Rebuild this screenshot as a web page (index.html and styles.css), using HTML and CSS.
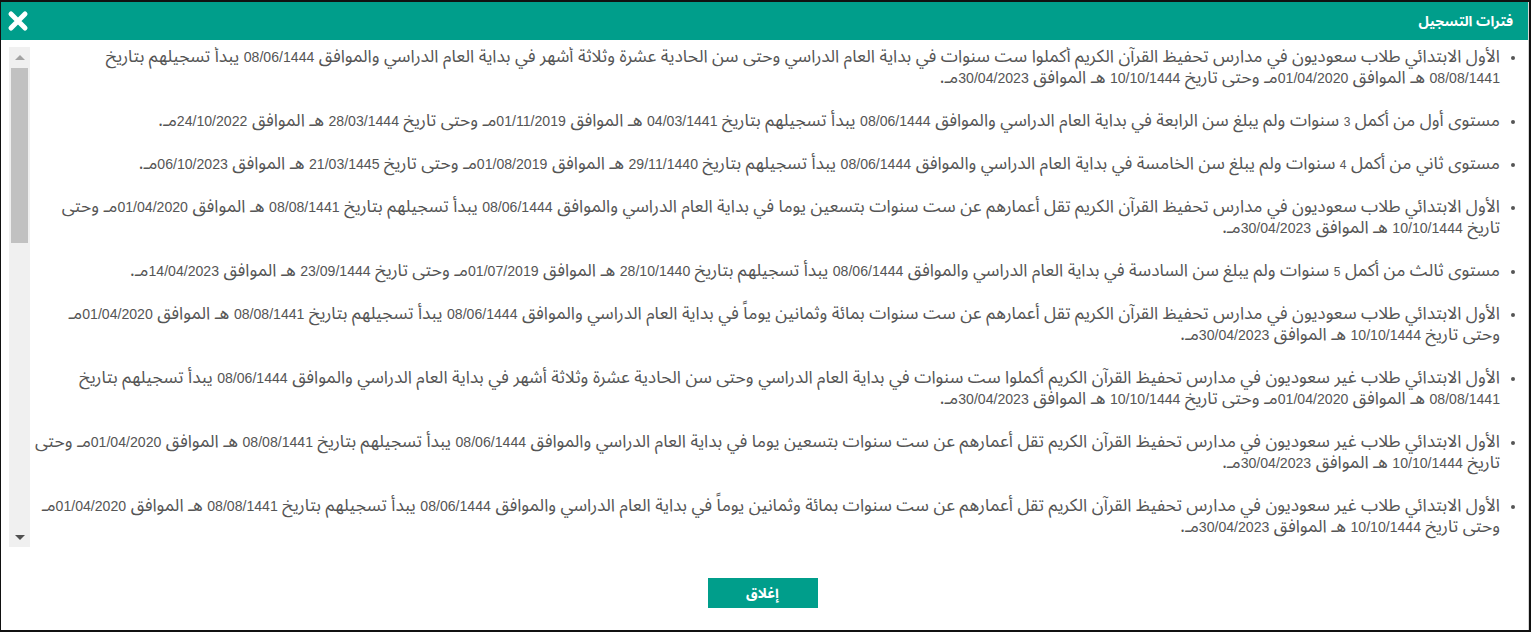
FILE: index.html
```html
<!DOCTYPE html>
<html lang="ar" dir="rtl">
<head>
<meta charset="utf-8">
<title>فترات التسجيل</title>
<link rel="stylesheet" href="styles.css">
</head>
<body>
<div class="dialog">
  <div class="dialog-header">
    <h1 class="dialog-title">فترات التسجيل</h1>
    <button class="close-x" type="button" aria-label="إغلاق">
      <svg width="22" height="22" viewBox="0 0 22 22"><path d="M4 4 L18 18 M18 4 L4 18" stroke="#fff" stroke-width="5" stroke-linecap="round" fill="none"/></svg>
    </button>
  </div>
  <div class="dialog-body">
    <div class="scroll-frame">
      <div class="scroll-content">
        <ul class="periods">
          <li>الأول الابتدائي طلاب سعوديون في مدارس تحفيظ القرآن الكريم أكملوا ست سنوات في بداية العام الدراسي وحتى سن الحادية عشرة وثلاثة أشهر في بداية العام الدراسي والموافق <time>08/06/1444</time> يبدأ تسجيلهم بتاريخ <time>08/08/1441</time> هـ الموافق <time>01/04/2020</time>مـ وحتى تاريخ <time>10/10/1444</time> هـ الموافق <time>30/04/2023</time>مـ.</li>
          <li>مستوى أول من أكمل <span class="num">3</span> سنوات ولم يبلغ سن الرابعة في بداية العام الدراسي والموافق <time>08/06/1444</time> يبدأ تسجيلهم بتاريخ <time>04/03/1441</time> هـ الموافق <time>01/11/2019</time>مـ وحتى تاريخ <time>28/03/1444</time> هـ الموافق <time>24/10/2022</time>مـ.</li>
          <li>مستوى ثاني من أكمل <span class="num">4</span> سنوات ولم يبلغ سن الخامسة في بداية العام الدراسي والموافق <time>08/06/1444</time> يبدأ تسجيلهم بتاريخ <time>29/11/1440</time> هـ الموافق <time>01/08/2019</time>مـ وحتى تاريخ <time>21/03/1445</time> هـ الموافق <time>06/10/2023</time>مـ.</li>
          <li>الأول الابتدائي طلاب سعوديون في مدارس تحفيظ القرآن الكريم تقل أعمارهم عن ست سنوات بتسعين يوما في بداية العام الدراسي والموافق <time>08/06/1444</time> يبدأ تسجيلهم بتاريخ <time>08/08/1441</time> هـ الموافق <time>01/04/2020</time>مـ وحتى تاريخ <time>10/10/1444</time> هـ الموافق <time>30/04/2023</time>مـ.</li>
          <li>مستوى ثالث من أكمل <span class="num">5</span> سنوات ولم يبلغ سن السادسة في بداية العام الدراسي والموافق <time>08/06/1444</time> يبدأ تسجيلهم بتاريخ <time>28/10/1440</time> هـ الموافق <time>01/07/2019</time>مـ وحتى تاريخ <time>23/09/1444</time> هـ الموافق <time>14/04/2023</time>مـ.</li>
          <li>الأول الابتدائي طلاب سعوديون في مدارس تحفيظ القرآن الكريم تقل أعمارهم عن ست سنوات بمائة وثمانين يوماً في بداية العام الدراسي والموافق <time>08/06/1444</time> يبدأ تسجيلهم بتاريخ <time>08/08/1441</time> هـ الموافق <time>01/04/2020</time>مـ وحتى تاريخ <time>10/10/1444</time> هـ الموافق <time>30/04/2023</time>مـ.</li>
          <li>الأول الابتدائي طلاب غير سعوديون في مدارس تحفيظ القرآن الكريم أكملوا ست سنوات في بداية العام الدراسي وحتى سن الحادية عشرة وثلاثة أشهر في بداية العام الدراسي والموافق <time>08/06/1444</time> يبدأ تسجيلهم بتاريخ <time>08/08/1441</time> هـ الموافق <time>01/04/2020</time>مـ وحتى تاريخ <time>10/10/1444</time> هـ الموافق <time>30/04/2023</time>مـ.</li>
          <li>الأول الابتدائي طلاب غير سعوديون في مدارس تحفيظ القرآن الكريم تقل أعمارهم عن ست سنوات بتسعين يوما في بداية العام الدراسي والموافق <time>08/06/1444</time> يبدأ تسجيلهم بتاريخ <time>08/08/1441</time> هـ الموافق <time>01/04/2020</time>مـ وحتى تاريخ <time>10/10/1444</time> هـ الموافق <time>30/04/2023</time>مـ.</li>
          <li>الأول الابتدائي طلاب غير سعوديون في مدارس تحفيظ القرآن الكريم تقل أعمارهم عن ست سنوات بمائة وثمانين يوماً في بداية العام الدراسي والموافق <time>08/06/1444</time> يبدأ تسجيلهم بتاريخ <time>08/08/1441</time> هـ الموافق <time>01/04/2020</time>مـ وحتى تاريخ <time>10/10/1444</time> هـ الموافق <time>30/04/2023</time>مـ.</li>
          <li>مستوى أول طلاب غير سعوديين من أكمل <span class="num">3</span> سنوات ولم يبلغ سن الرابعة في بداية العام الدراسي والموافق <time>08/06/1444</time> يبدأ تسجيلهم بتاريخ <time>04/03/1441</time> هـ الموافق <time>01/11/2019</time>مـ وحتى تاريخ <time>28/03/1444</time> هـ الموافق <time>24/10/2022</time>مـ.</li>
        </ul>
      </div>
      <div class="scrollbar" aria-hidden="true">
        <div class="sb-btn sb-up"><span class="arrow-up"></span></div>
        <div class="sb-track"><div class="sb-thumb"></div></div>
        <div class="sb-btn sb-down"><span class="arrow-down"></span></div>
      </div>
    </div>
  </div>
  <div class="dialog-footer">
    <button class="btn-close" type="button">إغلاق</button>
  </div>
</div>
</body>
</html>
```

FILE: styles.css
```css
html, body {
  margin: 0;
  padding: 0;
  background: #fff;
}

body {
  font-family: "Noto Sans Arabic", "DejaVu Sans", "Noto Sans", sans-serif;
}

.dialog {
  box-sizing: border-box;
  width: 1531px;
  height: 632px;
  border: 2px solid #111;
  border-left-width: 1px;
  box-shadow: inset -1px 0 0 #d6d6d6;
  display: flex;
  flex-direction: column;
  background: #fff;
}

.dialog-header {
  height: 38px;
  background: #009e8b;
  display: flex;
  align-items: center;
  justify-content: space-between;
  padding: 0 15px 0 6px;
  margin-right: 1px;
}

.dialog-title {
  margin: 0;
  color: #fff;
  font-size: 14px;
  font-weight: bold;
}

.close-x {
  border: 0;
  background: transparent;
  padding: 0;
  width: 22px;
  height: 22px;
  display: flex;
}

.dialog-body {
  padding: 7px 7px 0 8px;
}

.scroll-frame {
  height: 500px;
  display: flex;
}

.scroll-content {
  flex: 1;
  min-width: 0;
  overflow: hidden;
}

.scrollbar {
  width: 21px;
  flex: none;
  background: #f0f0f0;
  display: flex;
  flex-direction: column;
}

.sb-btn {
  height: 20px;
  display: flex;
  align-items: center;
  justify-content: center;
}

.arrow-up {
  width: 0;
  height: 0;
  border-left: 5px solid transparent;
  border-right: 5px solid transparent;
  border-bottom: 5px solid #a3a3a3;
}

.arrow-down {
  width: 0;
  height: 0;
  border-left: 5px solid transparent;
  border-right: 5px solid transparent;
  border-top: 5px solid #505050;
}

.sb-track {
  flex: 1;
  padding: 1px 2px 0;
}

.sb-thumb {
  height: 175px;
  background: #c1c1c1;
}

.periods {
  margin: -1px 0 0;
  padding: 0 22px 0 3px;
  list-style: disc;
  color: #555;
  font-family: "Noto Sans Arabic", "DejaVu Sans", sans-serif;
  font-size: 17.4px;
  line-height: 21px;
}

.periods li {
  margin: 0 0 22px;
}

.periods li::marker {
  color: #555;
  font-family: "Liberation Sans", sans-serif;
  font-size: 14px;
}

.periods time {
  font-family: "Liberation Sans", "Noto Sans", sans-serif;
  font-size: 14.1px;
  line-height: 1;
}

.num {
  font-family: "Liberation Sans", "Noto Sans", sans-serif;
  font-size: 12px;
  line-height: 1;
}

.dialog-footer {
  display: flex;
  justify-content: center;
  padding-top: 31px;
  padding-right: 5px;
}

.btn-close {
  width: 110px;
  height: 30px;
  border: 0;
  background: #009e8b;
  color: #fff;
  font-family: inherit;
  font-size: 14px;
  font-weight: bold;
}
```
